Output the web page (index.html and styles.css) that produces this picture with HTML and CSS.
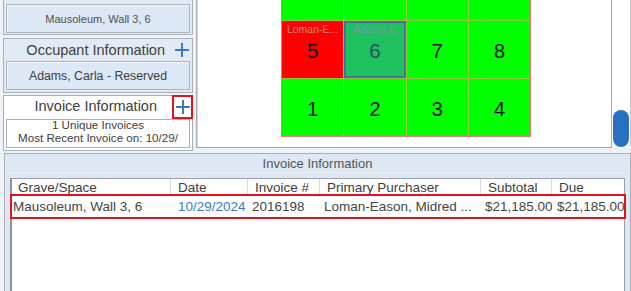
FILE: index.html
```html
<!DOCTYPE html>
<html>
<head>
<meta charset="utf-8">
<link rel="stylesheet" href="styles.css">
</head>
<body>
<div class="app">
  <div class="top">
    <div class="left">
      <div class="card card-first">
        <div class="box box-small">Mausoleum, Wall 3, 6</div>
      </div>
      <div class="card">
        <div class="card-head">
          <span class="head-text">Occupant Information</span>
          <span class="plus"><svg width="14" height="14" viewBox="0 0 14 14"><path d="M7 0V14M0 7H14" stroke="#3a78c4" stroke-width="2"/></svg></span>
        </div>
        <div class="box">Adams, Carla - Reserved</div>
      </div>
      <div class="card card-white">
        <div class="card-head head-inv">
          <span class="head-text">Invoice Information</span>
          <span class="plus plus-hl"><svg width="14" height="14" viewBox="0 0 14 14"><path d="M7 0V14M0 7H14" stroke="#3a78c4" stroke-width="2"/></svg></span>
        </div>
        <div class="box box-white"><div class="lines">1 Unique Invoices<br>Most Recent Invoice on: 10/29/</div></div>
      </div>
    </div>
    <div class="map">
      <div class="canvas">
        <div class="grid">
          <div class="cell"></div><div class="cell"></div><div class="cell"></div><div class="cell"></div>
          <div class="cell cell-red"><span class="tag tag-red">Loman-E...</span><span class="num">5</span></div>
          <div class="cell cell-sel"><span class="tag tag-sel">Adams,C</span><span class="num num-sel">6</span></div>
          <div class="cell"><span class="num">7</span></div>
          <div class="cell"><span class="num">8</span></div>
          <div class="cell"><span class="num">1</span></div>
          <div class="cell"><span class="num">2</span></div>
          <div class="cell"><span class="num">3</span></div>
          <div class="cell"><span class="num">4</span></div>
        </div>
      </div>
      <div class="scroll"><div class="thumb"></div></div>
    </div>
  </div>
  <div class="bottom">
    <div class="bhead">Invoice Information</div>
    <div class="list">
      <div class="lhead">
        <div class="hc">Grave/Space</div>
        <div class="hc">Date</div>
        <div class="hc">Invoice #</div>
        <div class="hc">Primary Purchaser</div>
        <div class="hc">Subtotal</div>
        <div class="hc">Due</div>
      </div>
      <div class="lrow">
        <div class="dc dc-first">Mausoleum, Wall 3, 6</div>
        <div class="dc dc-date">10/29/2024</div>
        <div class="dc">2016198</div>
        <div class="dc">Loman-Eason, Midred ...</div>
        <div class="dc">$21,185.00</div>
        <div class="dc dc-due">$21,185.00</div>
      </div>
    </div>
  </div>
</div>
</body>
</html>
```
FILE: styles.css
```css
* { box-sizing: border-box; }
html, body { margin: 0; padding: 0; }
body {
  width: 631px;
  height: 291px;
  overflow: hidden;
  background: #eef2f6;
  font-family: "Liberation Sans", Arial, sans-serif;
  color: #404040;
}
.app { display: flex; flex-direction: column; height: 291px; }
.top { display: flex; height: 149px; gap: 2px; }
.left {
  width: 194px;
  padding-left: 3px;
  display: flex;
  flex-direction: column;
  gap: 2px;
}
.card {
  width: 190px;
  border: 1px solid #a9b0b8;
  background: #e2ebf5;
  padding: 0 2px 2px 2px;
}
.card-first { border-top: none; padding-top: 4px; padding-bottom: 1px; height: 36px; margin-bottom: 1px; }
.card-white { background: #fff; }
.card-head {
  height: 22px;
  display: flex;
  align-items: center;
  justify-content: flex-end;
  gap: 9px;
  padding-right: 0;
}
.head-text { font-size: 14.5px; color: #404040; }
.head-inv { height: 23px; gap: 15px; margin-right: -3px; margin-top: -1px; align-items: flex-start; }
.head-inv .head-text { line-height: 23px; }
.plus {
  width: 16px;
  height: 20px;
  display: flex;
  align-items: center;
  justify-content: center;
}
.plus-hl {
  width: 21px;
  height: 24px;
  border: 2.5px solid #e0141c;
}
.box {
  height: 29px;
  border: 1px solid #aab2ba;
  box-shadow: inset 1px 1px 0 #f4f8fc;
  background: #dce8f5;
  display: flex;
  align-items: center;
  justify-content: center;
  font-size: 12.3px;
  color: #404040;
}
.box-small { font-size: 11px; color: #505050; }
.box-white {
  background: #fff;
  box-shadow: none;
  margin-top: 1px;
  flex-direction: column;
  justify-content: flex-start;
  font-size: 11.6px;
  line-height: 13px;
  height: 29px;
  text-align: center;
}
.lines { margin-top: -2px; }
.map { flex: 1; display: flex; height: 148px; }
.canvas {
  flex: 1;
  background: #fff;
  border: 1px solid #a8a8a8;
  border-top: none;
  box-shadow: inset 1px 0 0 #d8d8d8;
  padding-left: 84px;
  overflow: hidden;
}
.grid {
  width: 250px;
  display: grid;
  grid-template-columns: repeat(4, 1fr);
  grid-template-rows: 20px 57px 57px;
  gap: 1px;
  background: #9cc43a;
  border: 1px solid #f07878;
  border-top: none;
}
.cell {
  background: #00ff00;
  position: relative;
  display: flex;
  align-items: center;
  justify-content: center;
}
.cell-red { background: #ff0000; }
.cell-sel { background: #1fc05e; border: 2px solid #4272a4; }
.num { font-size: 20.5px; color: #111; padding-top: 2px; }
.num-sel { color: #2c4c6c; }
.tag {
  position: absolute;
  top: 2px;
  left: 0;
  right: 0;
  text-align: center;
  font-size: 10.5px;
  white-space: nowrap;
}
.tag-red { color: #d48686; }
.tag-sel { color: #7f94b4; top: 0px; }
.scroll { width: 19px; position: relative; background: #fff; border-right: 1px solid #c8c8c8; }
.thumb {
  position: absolute;
  left: 1px;
  width: 16px;
  top: 110px;
  height: 37px;
  border-radius: 8px;
  background: #2a70c0;
}
.bottom {
  margin-top: 4px;
  flex: 1;
  margin-left: 4px;
  border: 1px solid #a8b0b8;
  border-bottom: none;
  background: #dde8f4;
  padding: 0 5px 0 5px;
  display: flex;
  flex-direction: column;
}
.bhead {
  height: 19px;
  font-size: 13px;
  color: #555;
  text-align: center;
  line-height: 20px;
  border-bottom: 1px solid #eef4fa;
  margin-bottom: 5px;
}
.list {
  flex: 1;
  background: #fff;
  border: 1px solid #9aa0a8;
  border-left: 2px solid #8c9298;
  border-bottom: none;
}
.lhead, .lrow {
  display: grid;
  grid-template-columns: 159px 77px 72px 161px 71px 1fr;
}
.lhead { height: 16px; }
.hc {
  font-size: 13.5px;
  line-height: 17px;
  padding-left: 7px;
  border-right: 1px solid #d8d8d8;
  color: #404040;
  white-space: nowrap;
}
.hc:first-child { padding-left: 6px; }
.hc:last-child { border-right: none; }
.lrow {
  height: 21px;
  margin-top: 1px;
  outline: 2.5px solid #e0141c;
  outline-offset: 0px;
}
.dc {
  font-size: 13.5px;
  line-height: 21px;
  padding-left: 4px;
  white-space: nowrap;
  overflow: hidden;
  color: #454545;
}
.dc-first { padding-left: 1px; }
.dc-date { color: #3a7cc4; padding-left: 7px; }
.dc-due { padding-left: 5px; }
```
